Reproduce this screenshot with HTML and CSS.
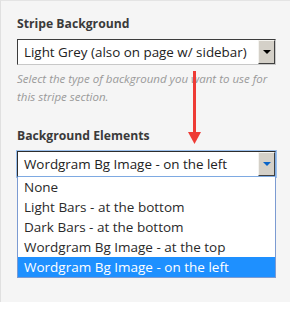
FILE: index.html
```html
<!DOCTYPE html>
<html>
<head>
<meta charset="utf-8">
<link rel="stylesheet" href="styles.css">
</head>
<body>
<div class="panel">
  <div class="field">
    <div class="label">Stripe Background</div>
    <div class="select">
      <span class="value">Light Grey (also on page w/ sidebar)</span>
      <span class="btn"><span class="tri"></span></span>
    </div>
    <div class="help">Select the type of background you want to use for this stripe section.</div>
  </div>
  <div class="field field-2">
    <div class="label">Background Elements</div>
    <div class="select focused">
      <span class="value">Wordgram Bg Image - on the left</span>
      <span class="btn"><span class="tri"></span></span>
    </div>
    <ul class="list">
      <li>None</li>
      <li>Light Bars - at the bottom</li>
      <li>Dark Bars - at the bottom</li>
      <li>Wordgram Bg Image - at the top</li>
      <li class="sel">Wordgram Bg Image - on the left</li>
    </ul>
  </div>
  <svg class="arrow" width="16" height="76" viewBox="0 0 16 76">
    <rect x="6" y="0" width="3" height="63" fill="#ee3b35"/>
    <polygon points="1,61 14,61 7.5,73" fill="#ee3b35"/>
  </svg>
</div>
</body>
</html>
```
FILE: styles.css
```css
html, body {
  margin: 0;
  padding: 0;
  background: #ffffff;
}
body {
  font-family: "Open Sans", "Noto Sans", sans-serif;
  color: #333;
}
.panel {
  position: relative;
  background: #f5f5f5;
  border-top: 1px solid #e4e4e4;
  border-left: 1px solid #e0e0e0;
  padding: 14px 0 0 16px;
  height: 287px;
  box-sizing: content-box;
}
.field {
  width: 259px;
}
.label {
  font-weight: 700;
  font-size: 12.2px;
  line-height: 18px;
  color: #3a3a3a;
}
.select {
  margin-top: 6px;
  height: 26px;
  box-sizing: border-box;
  background: #fff;
  border: 1px solid;
  border-color: #3c3c3c #c8c8c8 #c8c8c8 #3c3c3c;
  display: flex;
  align-items: stretch;
}
.select .value {
  flex: 1;
  padding-left: 6px;
  font-size: 13.4px;
  line-height: 24px;
  color: #222;
  white-space: nowrap;
  overflow: hidden;
}
.btn {
  width: 17px;
  box-sizing: border-box;
  background: #d4d0c8;
  border: 1px solid;
  border-color: #f4f3ef #404040 #404040 #f4f3ef;
  display: flex;
  align-items: center;
  justify-content: center;
}
.tri {
  width: 0;
  height: 0;
  border-left: 4px solid transparent;
  border-right: 4px solid transparent;
  border-top: 4px solid #000;
}
.help {
  margin-top: 5px;
  width: 262px;
  font-size: 11.5px;
  line-height: 18px;
  font-style: italic;
  color: #9a9a9a;
}
.field-2 {
  margin-top: 21px;
}
.select.focused {
  border-color: #2d2d2d #7eaae2 #7eaae2 #2d2d2d;
  box-shadow: 0 0 0 1px #9cc0ec;
}
.select.focused .tri {
  border-top-color: #0a64c8;
}
.list {
  list-style: none;
  margin: 0;
  padding: 0;
  background: #fff;
  border: 1px solid #7c9bd2;
  border-top: none;
}
.list li {
  height: 20px;
  line-height: 20px;
  padding-left: 6px;
  font-size: 13.5px;
  color: #2a2a2a;
  white-space: nowrap;
}
.list li.sel {
  background: #1e90ff;
  color: #fff;
}
.arrow {
  position: absolute;
  left: 186px;
  top: 70px;
}
```
